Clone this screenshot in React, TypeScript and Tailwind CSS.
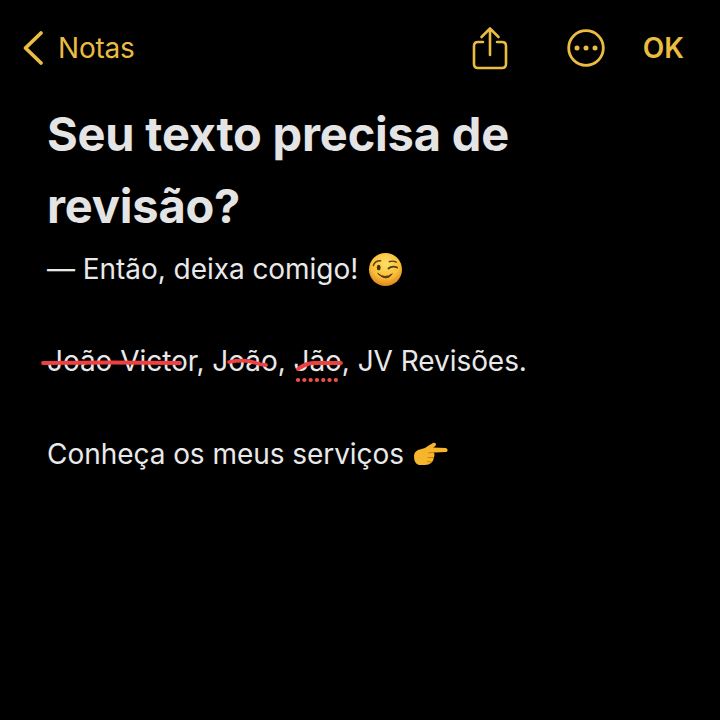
const Wink = () => (
  <svg width="35" height="35" viewBox="0 0 36 36" className="inline-block shrink-0">
    <defs>
      <radialGradient id="face" cx="50%" cy="32%" r="72%">
        <stop offset="0%" stopColor="#fde066" />
        <stop offset="60%" stopColor="#f8bf38" />
        <stop offset="100%" stopColor="#dc7a18" />
      </radialGradient>
    </defs>
    <circle cx="18" cy="18" r="17" fill="url(#face)" />
    <path d="M5.5 14 Q7 9 13 9" fill="none" stroke="#5b3a12" strokeWidth="1.4" strokeLinecap="round" />
    <ellipse cx="11" cy="16" rx="2" ry="2.8" fill="#4a2f10" />
    <path d="M21 17 Q25 13.5 30 16" fill="none" stroke="#5b3a12" strokeWidth="1.8" strokeLinecap="round" />
    <path d="M22 10 Q25.5 8.5 29 10.5" fill="none" stroke="#5b3a12" strokeWidth="1.4" strokeLinecap="round" />
    <path d="M10 22 Q17 28 25 22.5 Q19 31 10 22Z" fill="#5b3310" stroke="#5b3310" strokeWidth="1" strokeLinejoin="round" />
  </svg>
);

const PointRight = () => (
  <svg width="36" height="24" viewBox="0 0 36 24" className="inline-block shrink-0">
    <path
      d="M1 14 Q1 10 5 8 L12 6 Q16 3 20 1 Q23 0 23 2.5 Q23 4.5 20 5.5 L33 6 Q36 8 33.5 10 L21 10.5 Q22 13 21 15.5 Q20.5 19 18 21 Q16 23 12 23 L6 23 Q1 22 1 14Z"
      fill="#f7b52c"
    />
    <path d="M15 11 Q18 10.5 21 10.5 M14.5 15.5 L21 15.5 M14 19.5 L18.5 20" stroke="#c47a10" strokeWidth="0.9" fill="none" />
  </svg>
);

const App = () => {
  return (
    <div className="w-[720px] h-[720px] bg-black text-[#e9e9e9] overflow-hidden font-['Inter','Liberation_Sans',sans-serif]">
      <header className="flex items-center h-[96px] pl-[22px] pr-[36px] text-[#eabc42]">
        <svg width="22" height="36" viewBox="0 0 22 36" fill="none" stroke="currentColor" strokeWidth="3.8" strokeLinecap="round" strokeLinejoin="round">
          <path d="M19 3 L3.5 18 L19 33" />
        </svg>
        <span className="ml-[14px] text-[28px] leading-none tracking-[-0.2px]">Notas</span>
        <svg className="ml-auto" width="36" height="44" viewBox="0 0 36 44" fill="none" stroke="currentColor" strokeWidth="2.6" strokeLinecap="round" strokeLinejoin="round">
          <path d="M18 29 V3 M9.5 11 L18 2.5 L26.5 11" />
          <path d="M11 16 H6 Q2 16 2 20 V38 Q2 42 6 42 H30 Q34 42 34 38 V20 Q34 16 30 16 H25" />
        </svg>
        <svg className="ml-[59px]" width="38" height="38" viewBox="0 0 38 38" fill="none" stroke="currentColor">
          <circle cx="19" cy="19" r="17.3" strokeWidth="2.8" />
          <circle cx="10" cy="19" r="2.5" fill="currentColor" stroke="none" />
          <circle cx="19" cy="19" r="2.5" fill="currentColor" stroke="none" />
          <circle cx="28" cy="19" r="2.5" fill="currentColor" stroke="none" />
        </svg>
        <span className="ml-[38px] text-[28px] leading-none font-semibold">OK</span>
      </header>

      <main className="pl-[47px] pt-[2px]">
        <h1 className="w-[560px] text-[47px] leading-[72px] font-bold tracking-[-0.2px] text-[#e4e4e4]">
          Seu texto precisa de revisão?
        </h1>
        <p className="mt-[4px] flex items-center h-[46px] text-[28px] tracking-[-0.05px]">
          — Então, deixa comigo!
          <span className="ml-[10px] flex"><Wink /></span>
        </p>

        <p className="relative mt-[46px] h-[46px] leading-[46px] text-[28px] tracking-[-0.05px] whitespace-nowrap">
          João Victor, João, Jão, JV Revisões.
          <svg className="absolute left-[-47px] top-0" width="720" height="46" viewBox="0 0 720 46" fill="none" strokeLinecap="round">
            <path d="M43 25 Q110 24 180 25" stroke="#ee4040" strokeWidth="3.8" />
            <path d="M229 24 Q245 21 256 25 Q262 27 266 27" stroke="#ee4040" strokeWidth="3.8" />
            <path d="M298 31 Q306 25 314 25 L341 25" stroke="#ee4040" strokeWidth="3.8" />
            <path d="M298 42 H342" stroke="#f0504c" strokeWidth="4.2" strokeDasharray="0.1 6.2" />
          </svg>
        </p>

        <p className="mt-[47px] flex items-center h-[46px] text-[28px] tracking-[-0.05px]">
          Conheça os meus serviços
          <span className="ml-[9px] flex"><PointRight /></span>
        </p>
      </main>
    </div>
  );
};

export default App;
